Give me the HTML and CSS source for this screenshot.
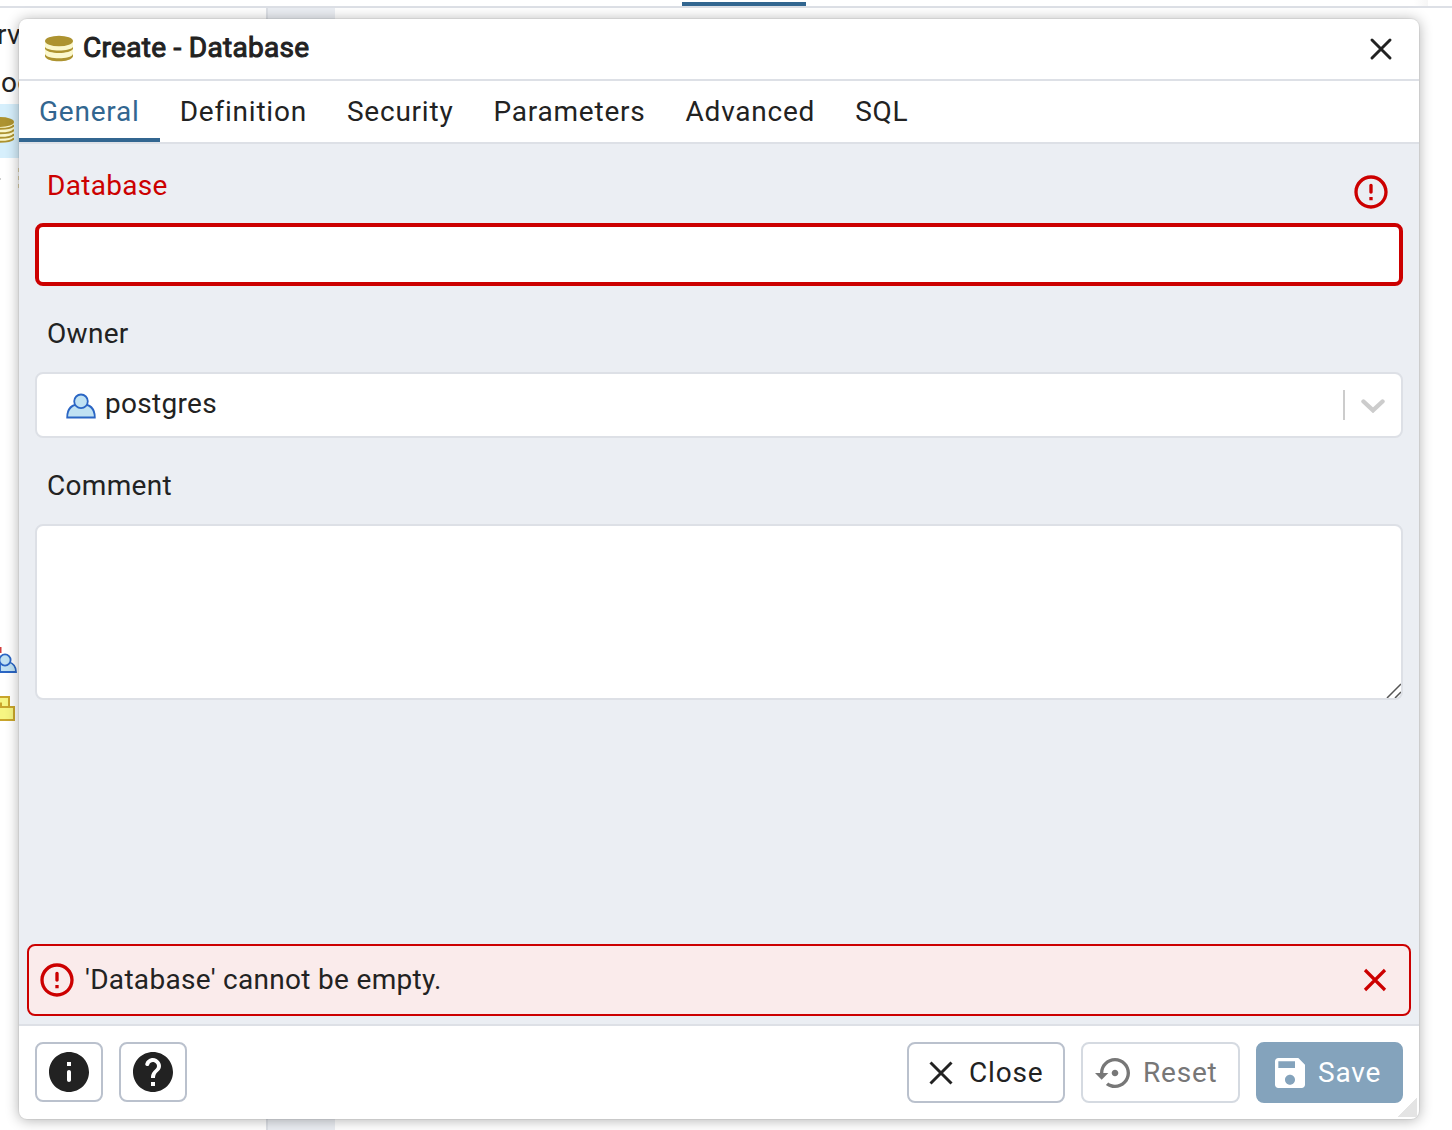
FILE: index.html
```html
<!DOCTYPE html>
<html lang="en">
<head>
<meta charset="utf-8">
<title>Create - Database</title>
<link rel="stylesheet" href="styles.css">
</head>
<body>
<div class="app">
  <div class="topbar"><span class="topbar-active"></span><span class="topbar-fade"></span></div>
  <div class="workspace">
    <div class="tree">
      <div class="row"><span class="row-text">rv</span></div>
      <div class="row"><span class="row-text next">oc</span></div>
      <div class="row selected">
        <svg class="stack" width="28" height="28" viewBox="0 0 28 28"><path d="M0 6v15c0 7 28 7 28 0V6z" fill="#fbf8cd"/><ellipse cx="14" cy="6" rx="14" ry="5" fill="#ad9330"/><path d="M0 9c2 5 26 5 28 0M0 13.500c2 5 26 5 28 0M0 18c2 5 26 5 28 0M0 22c2 5 26 5 28 0" fill="none" stroke="#ad9330" stroke-width="2"/></svg>
      </div>
      <div class="row faint">
        <span class="dash"></span>
        <svg width="28" height="26" viewBox="0 0 28 26"><path d="M0 4h4M0 12h4M0 20h4" stroke="#ad9330" stroke-width="4"/></svg>
      </div>
      <div class="spacer"></div>
      <div class="row">
        <svg width="18" height="30" viewBox="0 0 18 30"><path d="M0 1v6" stroke="#d13c3c" stroke-width="3"/><path d="M0 26h16c0-6-4-9-7-10H0z" fill="#c0e2f3" stroke="#2b66c4" stroke-width="1.800"/><circle cx="5" cy="14" r="5.600" fill="#c0e2f3" stroke="#2b66c4" stroke-width="1.800"/></svg>
      </div>
      <div class="row">
        <svg width="18" height="30" viewBox="0 0 18 30"><path d="M-1 3H9V13H14V26H-1z" fill="#f6f582" stroke="#c9a52c" stroke-width="2"/><path d="M-1 13h10M-1 9.500h2V13" fill="none" stroke="#c9a52c" stroke-width="2"/></svg>
      </div>
    </div>
    <div class="gutter"></div>
    <div class="content"></div>
  </div>
</div>

<div class="dialog">
  <header class="dialog-header">
    <svg class="title-icon" width="28" height="28" viewBox="0 0 28 28"><path d="M0 6v14.500c0 7 28 7 28 0V6z" fill="#fbf8cd"/><ellipse cx="14" cy="6" rx="14" ry="5.300" fill="#ad9330"/><path d="M0 11.800v2c2 5.600 26 5.600 28 0v-2c-2 5-26 5-28 0zM0 19v2.400c2 6.400 26 6.400 28 0V19c-2 5.800-26 5.800-28 0z" fill="#ad9330"/></svg>
    <h1 class="title">Create - Database</h1>
    <svg class="dialog-close" width="24" height="24" viewBox="0 0 24 24"><path d="M3 3l18 18M21 3L3 21" stroke="#222" stroke-width="3" stroke-linecap="round"/></svg>
  </header>
  <nav class="tabs">
    <span class="tab active">General</span><span class="tab">Definition</span><span class="tab">Security</span><span class="tab">Parameters</span><span class="tab">Advanced</span><span class="tab">SQL</span>
  </nav>
  <main class="form">
    <div class="field-head invalid"><label for="name">Database</label>
      <svg width="40" height="40" viewBox="0 0 24 24"><path fill="#c00" d="M12 7c.55 0 1 .45 1 1v4c0 .55-.45 1-1 1s-1-.45-1-1V8c0-.55.45-1 1-1zm-.01-5C6.470 2 2 6.480 2 12s4.470 10 9.990 10C17.520 22 22 17.520 22 12S17.520 2 11.990 2zM12 20c-4.420 0-8-3.580-8-8s3.580-8 8-8 8 3.580 8 8-3.580 8-8 8zm1-3h-2v-2h2v2z"/></svg>
    </div>
    <input class="control name" id="name" type="text">
    <div class="field-head owner-head"><label>Owner</label></div>
    <div class="control select">
      <svg class="user" width="30" height="26" viewBox="0 0 30 26"><path d="M1.200 24.500C1.200 16 6 11 15 11s13.800 5 13.800 13.500z" fill="#c0e2f3" stroke="#2b66c4" stroke-width="1.800"/><circle cx="15" cy="8.300" r="6.800" fill="#c0e2f3" stroke="#2b66c4" stroke-width="1.800"/></svg>
      <span class="select-value">postgres</span>
      <span class="divider"></span>
      <svg class="chevron" width="24" height="14" viewBox="0 0 24 14"><path d="M2.500 2.500L12 11.300l9.500-8.800" fill="none" stroke="#ccc" stroke-width="4.400" stroke-linecap="round" stroke-linejoin="miter"/></svg>
    </div>
    <div class="field-head comment-head"><label for="comment">Comment</label></div>
    <div class="control comment" id="comment"><svg width="15" height="15" viewBox="0 0 15 15"><path d="M1 15L15 1M9 15l6-6" stroke="#555" stroke-width="1.500"/></svg></div>
    <div class="alert">
      <svg width="40" height="40" viewBox="0 0 24 24"><path fill="#c00" d="M12 7c.55 0 1 .45 1 1v4c0 .55-.45 1-1 1s-1-.45-1-1V8c0-.55.45-1 1-1zm-.01-5C6.470 2 2 6.480 2 12s4.470 10 9.990 10C17.520 22 22 17.520 22 12S17.520 2 11.990 2zM12 20c-4.420 0-8-3.580-8-8s3.580-8 8-8 8 3.580 8 8-3.580 8-8 8zm1-3h-2v-2h2v2z"/></svg>
      <span class="alert-text">'Database' cannot be empty.</span>
      <svg width="24" height="24" viewBox="0 0 24 24"><path d="M2 2l20 20M22 2L2 22" stroke="#c00" stroke-width="3.200"/></svg>
    </div>
  </main>
  <footer class="footer">
    <span class="btn icon-btn"><svg width="48" height="48" viewBox="0 0 24 24"><path fill="#222" d="M12 2C6.480 2 2 6.480 2 12s4.480 10 10 10 10-4.480 10-10S17.520 2 12 2zm0 15c-.55 0-1-.45-1-1v-4c0-.55.45-1 1-1s1 .45 1 1v4c0 .55-.45 1-1 1zm1-8h-2V7h2v2z"/></svg></span>
    <span class="btn icon-btn"><svg width="48" height="48" viewBox="0 0 24 24"><path fill="#222" d="M12 2C6.480 2 2 6.480 2 12s4.480 10 10 10 10-4.480 10-10S17.520 2 12 2zm1 17h-2v-2h2v2zm2.070-7.750l-.9.920c-.5.510-.86.970-1.040 1.690-.08.320-.13.680-.13 1.140h-2v-.5c0-.46.080-.9.220-1.310.2-.58.530-1.100.95-1.520l1.240-1.260c.46-.44.680-1.100.55-1.800-.13-.72-.69-1.330-1.390-1.530-1.110-.31-2.140.320-2.470 1.270-.12.370-.43.650-.82.650h-.3C8.400 9 8 8.440 8.160 7.880c.43-1.470 1.680-2.590 3.230-2.830 1.520-.24 2.970.55 3.870 1.800 1.180 1.630.83 3.380-.19 4.400z"/></svg></span>
    <span class="push"></span>
    <span class="btn close-btn"><svg width="24" height="24" viewBox="0 0 24 24"><path d="M1.500 1.500l21 21M22.500 1.500l-21 21" stroke="#222" stroke-width="3"/></svg>Close</span>
    <span class="btn reset-btn"><svg width="40" height="40" viewBox="0 0 24 24"><path fill="#777" d="M14 12c0-1.100-.9-2-2-2s-2 .9-2 2 .9 2 2 2 2-.9 2-2zm-2-9c-4.970 0-9 4.030-9 9H0l4 4 4-4H5c0-3.870 3.130-7 7-7s7 3.130 7 7-3.130 7-7 7c-1.510 0-2.910-.49-4.060-1.300l-1.420 1.440C8.040 20.300 9.940 21 12 21c4.970 0 9-4.030 9-9s-4.030-9-9-9z"/></svg>Reset</span>
    <span class="btn save-btn"><svg width="40" height="40" viewBox="0 0 24 24"><path fill="#fff" d="M17 3H5c-1.110 0-2 .9-2 2v14c0 1.100.89 2 2 2h14c1.100 0 2-.9 2-2V7l-4-4zm-5 16c-1.660 0-3-1.340-3-3s1.340-3 3-3 3 1.340 3 3-1.340 3-3 3zm3-10H5V5h10v4z"/></svg>Save</span>
    <span class="grip"></span>
  </footer>
</div>
</body>
</html>
```
FILE: styles.css
```css
* { box-sizing: border-box; }
body {
  margin: 0;
  height: 1130px;
  overflow: hidden;
  background: #fff;
  color: #222;
  font: 28px/40px Roboto, sans-serif;
  letter-spacing: 0.3px;
}
svg { display: block; flex: none; }

.app { height: 1130px; display: flex; flex-direction: column; overflow: hidden; }
.topbar {
  height: 8px;
  flex: none;
  display: flex;
  justify-content: space-between;
  padding-left: 682px;
  padding-right: 24px;
  border-bottom: 2px solid #dde0e6;
}
.topbar-active { width: 124px; height: 4px; margin-top: 2px; background: #326690; }
.topbar-fade { width: 14px; background: linear-gradient(to right, #fff, #f6f6f6); }
.workspace { flex: 1; display: flex; }
.tree { width: 266px; padding-top: 3px; display: flex; flex-direction: column; }
.row { height: 48px; flex: none; display: flex; align-items: center; }
.row-text { margin-left: -3px; }
.row-text.next { margin-left: 1px; }
.row.selected { height: 54px; margin-top: -3px; padding-bottom: 2px; background: #d6effc; }
.stack { margin-left: -14px; }
.row.faint { margin-top: -3px; opacity: .4; }
.dash { width: 1px; height: 2px; margin-right: 17px; background: #888; }
.spacer { height: 434px; }
.gutter { width: 69px; background: #ebeef3; border-left: 2px solid #dde0e6; }
.content { flex: 1; }

.dialog {
  position: absolute;
  left: 19px;
  top: 19px;
  width: 1400px;
  height: 1100px;
  display: flex;
  flex-direction: column;
  overflow: hidden;
  border-radius: 8px;
  background: #fff;
  box-shadow: 0 0 0 1px rgba(0,0,0,.05), 0 1px 14px rgba(0,0,0,.32);
}
.dialog-header {
  height: 62px;
  flex: none;
  display: flex;
  align-items: center;
  padding: 0 26px 2px;
  border-bottom: 2px solid #dde0e6;
}
.title-icon { margin-top: 1px; }
.title { margin: 0 0 0 10px; font-size: 28px; line-height: 40px; font-weight: 400; -webkit-text-stroke: 1px #222; }
.dialog-close { margin: 2px 0 0 auto; }
.tabs { height: 63px; flex: none; display: flex; border-bottom: 2px solid #dde0e6; }
.tab { height: 61px; padding: 11px 20px 0; letter-spacing: 0.78px; border-bottom: 4px solid transparent; }
.tab.active { color: #326690; border-color: #326690; }

.form { flex: 1; min-height: 0; display: flex; flex-direction: column; padding: 22px 8px 8px; background: #ebeef3; }
.field-head { display: flex; justify-content: space-between; height: 40px; padding: 0 20px; flex: none; }
.invalid { height: 57px; color: #c00; }
.invalid svg { margin-top: 6px; }
.control { margin: 0 8px; flex: none; background: #fff; border: 2px solid #dde0e6; border-radius: 8px; }
.name { height: 63px; border: 4px solid #c00; font: inherit; padding: 0 12px; outline: 0; }
.owner-head { margin-top: 28px; }
.select { height: 66px; margin-top: 18px; display: flex; align-items: center; padding: 0 16px 0 29px; }
.user { margin-top: 1px; }
.select-value { margin: -2px auto 0 9px; }
.divider { width: 2px; height: 30px; margin-right: 16px; background: #ccc; }
.chevron { margin-top: 2px; }
.comment-head { margin-top: 28px; }
.comment { height: 176px; margin-top: 18px; display: flex; align-items: flex-end; justify-content: flex-end; }
.alert {
  height: 72px;
  margin-top: auto;
  display: flex;
  align-items: center;
  padding: 0 22px 0 8px;
  background: #faebeb;
  border: 2px solid #c00;
  border-radius: 8px;
}
.alert-text { margin: 0 auto 0 8px; }

.footer {
  height: 95px;
  flex: none;
  position: relative;
  display: flex;
  align-items: flex-start;
  gap: 16px;
  padding: 16px;
  border-top: 2px solid #dde0e6;
}
.btn { height: 61px; display: flex; align-items: center; border: 2px solid #bac1cd; border-radius: 8px; letter-spacing: 0.8px; }
.icon-btn { width: 68px; height: 60px; justify-content: center; }
.push { flex: 1; }
.close-btn { width: 158px; padding-left: 20px; gap: 16px; }
.reset-btn { width: 159px; padding-left: 12px; gap: 8px; color: #777; border-color: #d5dae1; }
.save-btn { width: 147px; padding-left: 12px; gap: 8px; color: #fff; background: #84a3bc; border-color: #84a3bc; }
.grip {
  position: absolute;
  right: 2px;
  bottom: 2px;
  width: 19px;
  height: 19px;
  background: linear-gradient(135deg, transparent 50%, #e4e4e4 50%);
}
```
